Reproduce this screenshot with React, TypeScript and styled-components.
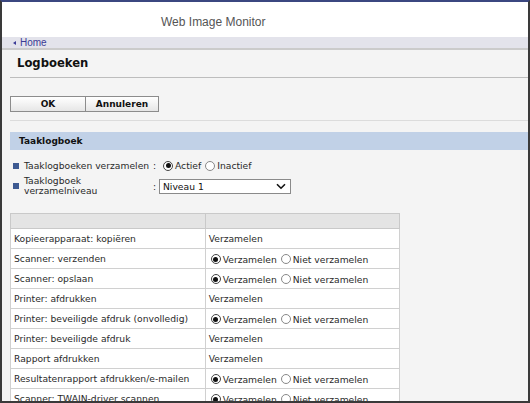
import React from "react";
import styled, { createGlobalStyle } from "styled-components";

const Global = createGlobalStyle`
  html, body { margin: 0; padding: 0; background: #ffffff; }
  * { box-sizing: border-box; }
`;

const Frame = styled.div`
  width: 530px;
  height: 403px;
  overflow: hidden;
  position: relative;
  border-top: 2px solid #3b4780;
  border-left: 2px solid #3a3a3a;
  border-right: 2px solid #3a3a3a;
  border-bottom: 2px solid #3a3a3a;
  background: #f4f4f4;
  font-family: "DejaVu Sans", Verdana, sans-serif;
  font-size: 9.2px;
  color: #2a2a2a;
`;

const Header = styled.div`
  height: 35px;
  background: #ffffff;
  display: flex;
  align-items: center;
  padding: 5px 0 0 159px;
  font-family: "Liberation Sans", Arial, sans-serif;
  font-size: 12px;
  color: #555555;
`;

const HomeBar = styled.div`
  height: 13px;
  background: #e3e3eb;
  border-bottom: 2px solid #cbcbcb;
  display: flex;
  align-items: center;
  gap: 4px;
  padding-left: 11px;
  font-family: "Liberation Sans", Arial, sans-serif;
  font-size: 10px;
  line-height: 11px;
  color: #3b3b96;
`;

const Arrow = styled.span`
  width: 0;
  height: 0;
  border-top: 2.5px solid transparent;
  border-bottom: 2.5px solid transparent;
  border-right: 3px solid #3b3b96;
  margin-top: 1px;
`;

const Main = styled.div`
  padding-left: 8px;
`;

const Title = styled.h1`
  margin: 0;
  padding: 6px 0 0 7px;
  height: 28px;
  font-size: 11.6px;
  line-height: 14px;
  font-weight: bold;
  color: #111;
  border-bottom: 1px solid #bdbdbd;
`;

const ButtonBar = styled.div`
  display: flex;
  padding: 18px 0 8px 0;
  border-bottom: 1px solid #dcdcdc;
`;

const Button = styled.button<{ $w: number }>`
  width: ${(p) => p.$w}px;
  height: 16px;
  padding: 0;
  margin: 0;
  border: 1px solid #8c8c8c;
  background: linear-gradient(#ffffff, #e6e6e6);
  font-family: "DejaVu Sans", Verdana, sans-serif;
  font-size: 9px;
  font-weight: bold;
  color: #111;
  & + & { margin-left: -1px; }
`;

const SectionHead = styled.div`
  margin-top: 11px;
  height: 18px;
  background: #c1d1e7;
  display: flex;
  align-items: center;
  padding-left: 9px;
  font-size: 9px;
  font-weight: bold;
  color: #111;
`;

const Form = styled.div`
  padding-top: 8px;
  display: flex;
  flex-direction: column;
  gap: 3px;
`;

const FormRow = styled.div<{ $h: number }>`
  display: flex;
  align-items: center;
  min-height: ${(p) => p.$h}px;
  padding-left: 3px;
`;

const Bullet = styled.span`
  width: 6px;
  height: 6px;
  background: #3e5a92;
  flex: none;
  margin-right: 5px;
`;

const Label = styled.span`
  width: 129px;
  line-height: 10px;
  flex: none;
`;

const Colon = styled.span`
  width: 6px;
  flex: none;
`;

const RadioGroup = styled.span`
  display: inline-flex;
  align-items: center;
  margin-left: 4px;
`;

const RadioCircle = styled.span<{ $on?: boolean }>`
  width: 10px;
  height: 10px;
  border-radius: 50%;
  border: 1px solid ${(p) => (p.$on ? "#444" : "#888")};
  background: #fff;
  display: inline-flex;
  align-items: center;
  justify-content: center;
  flex: none;
  margin-right: 2px;
  &::after {
    content: "";
    width: 5px;
    height: 5px;
    border-radius: 50%;
    background: ${(p) => (p.$on ? "#111" : "transparent")};
  }
`;

const RadioText = styled.span`
  margin-right: 4px;
`;

const Select = styled.div`
  width: 132px;
  height: 15px;
  border: 1px solid #8a8a8a;
  background: #fff;
  display: flex;
  align-items: center;
  justify-content: space-between;
  padding: 0 4px 0 3px;
  color: #111;
`;

const Table = styled.table`
  margin-top: 17px;
  width: 390px;
  border-collapse: collapse;
  background: #fff;
  border: 1px solid #c6c6c6;
`;

const HeadCell = styled.td`
  height: 15px;
  background: #e4e4e4;
  border: 1px solid #c9c9c9;
  padding: 0;
`;

const Cell = styled.td`
  height: 20px;
  border: 1px solid #d0d0d0;
  padding: 0 3px;
  width: 195px;
  vertical-align: middle;
  white-space: nowrap;
`;

const CellRadios = styled.span`
  display: inline-flex;
  align-items: center;
  padding-left: 2px;
`;

type Row = { label: string; choice: boolean };

const rows: Row[] = [
  { label: "Kopieerapparaat: kopiëren", choice: false },
  { label: "Scanner: verzenden", choice: true },
  { label: "Scanner: opslaan", choice: true },
  { label: "Printer: afdrukken", choice: false },
  { label: "Printer: beveiligde afdruk (onvolledig)", choice: true },
  { label: "Printer: beveiligde afdruk", choice: false },
  { label: "Rapport afdrukken", choice: false },
  { label: "Resultatenrapport afdrukken/e-mailen", choice: true },
  { label: "Scanner: TWAIN-driver scannen", choice: true },
];

const Chevron = () => (
  <svg width="10" height="7" viewBox="0 0 10 7">
    <path d="M1 1.2 L5 5.2 L9 1.2" fill="none" stroke="#111" strokeWidth="1.6" />
  </svg>
);

export default function App() {
  return (
    <>
      <Global />
      <Frame>
        <Header>Web Image Monitor</Header>
        <HomeBar>
          <Arrow />
          <span>Home</span>
        </HomeBar>
        <Main>
          <Title>Logboeken</Title>
          <ButtonBar>
            <Button $w={76}>OK</Button>
            <Button $w={74}>Annuleren</Button>
          </ButtonBar>
          <SectionHead>Taaklogboek</SectionHead>
          <Form>
            <FormRow $h={15}>
              <Bullet />
              <Label>Taaklogboeken verzamelen</Label>
              <Colon>:</Colon>
              <RadioGroup>
                <RadioCircle $on />
                <RadioText>Actief</RadioText>
                <RadioCircle />
                <RadioText>Inactief</RadioText>
              </RadioGroup>
            </FormRow>
            <FormRow $h={20}>
              <Bullet />
              <Label>
                Taaklogboek
                <br />
                verzamelniveau
              </Label>
              <Colon>:</Colon>
              <Select>
                <span>Niveau 1</span>
                <Chevron />
              </Select>
            </FormRow>
          </Form>
          <Table>
            <tbody>
              <tr>
                <HeadCell />
                <HeadCell />
              </tr>
              {rows.map((r) => (
                <tr key={r.label}>
                  <Cell>{r.label}</Cell>
                  <Cell>
                    {r.choice ? (
                      <CellRadios>
                        <RadioCircle $on />
                        <RadioText>Verzamelen</RadioText>
                        <RadioCircle />
                        <RadioText>Niet verzamelen</RadioText>
                      </CellRadios>
                    ) : (
                      "Verzamelen"
                    )}
                  </Cell>
                </tr>
              ))}
            </tbody>
          </Table>
        </Main>
      </Frame>
    </>
  );
}
